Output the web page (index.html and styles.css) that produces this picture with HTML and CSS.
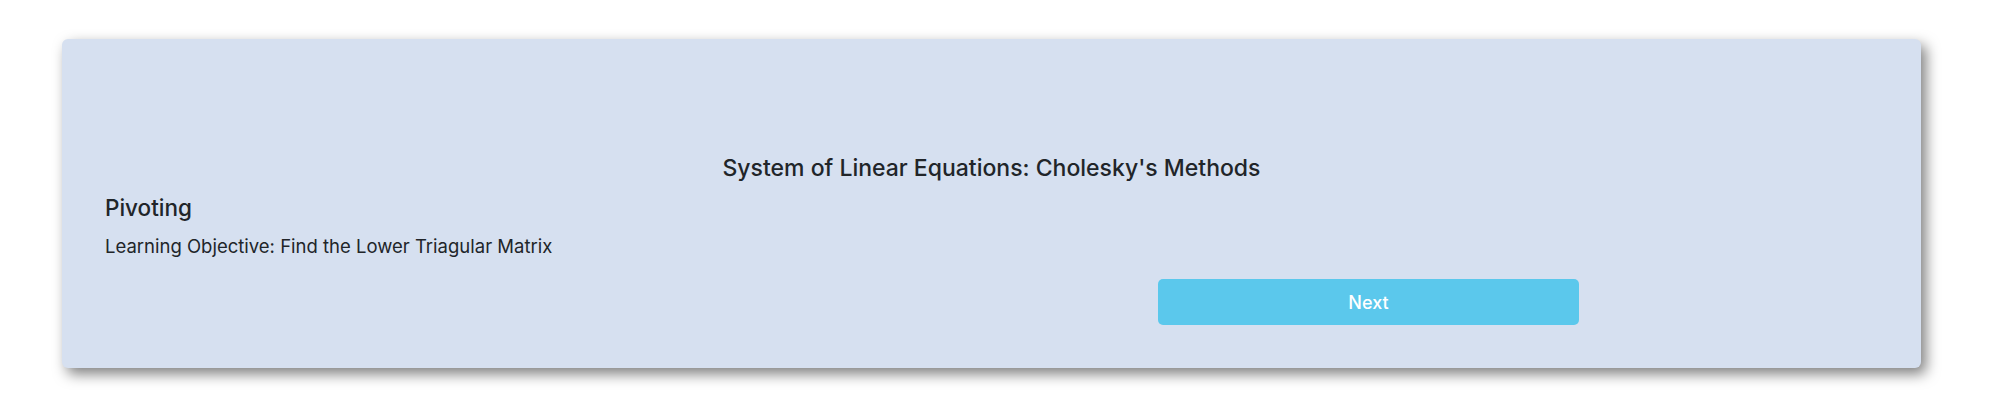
FILE: index.html
```html
<!DOCTYPE html>
<html lang="en">
<head>
<meta charset="utf-8">
<title>Cholesky's Methods</title>
<link rel="stylesheet" href="styles.css">
</head>
<body>
<div class="page">
  <section class="card">
    <h2 class="title">System of Linear Equations: Cholesky's Methods</h2>
    <h3 class="section">Pivoting</h3>
    <p class="objective">Learning Objective: Find the Lower Triagular Matrix</p>
    <div class="actions">
      <button class="btn-next" type="button">Next</button>
    </div>
  </section>
</div>
</body>
</html>
```
FILE: styles.css
```css
* { box-sizing: border-box; }
html, body { margin: 0; background: #ffffff; }
body {
  font-family: Inter, "Noto Sans", "Liberation Sans", sans-serif;
  color: #212529;
}
.page {
  padding: 39px 79px 38px 62px;
}
.card {
  background: #d6e0f0;
  border-radius: 6px;
  box-shadow: 5px 6px 14px rgba(0, 0, 0, 0.5);
  padding: 116px 43px 42px 43px;
  height: 329px;
}
.title {
  margin: 0;
  text-align: center;
  font-size: 23px;
  line-height: 27px;
  font-weight: 500;
}
.section {
  margin: 11px 0 0;
  font-size: 22.5px;
  line-height: 29px;
  font-weight: 500;
}
.objective {
  margin: 11px 0 0;
  font-size: 18.5px;
  line-height: 27px;
}
.actions {
  margin-top: 19px;
  padding-left: 1053px;
}
.btn-next {
  display: block;
  width: 421px;
  height: 46px;
  border: 0;
  border-radius: 5px;
  background: #5bc8ec;
  color: #ffffff;
  font-family: inherit;
  font-size: 18px;
  font-weight: 500;
}
```
